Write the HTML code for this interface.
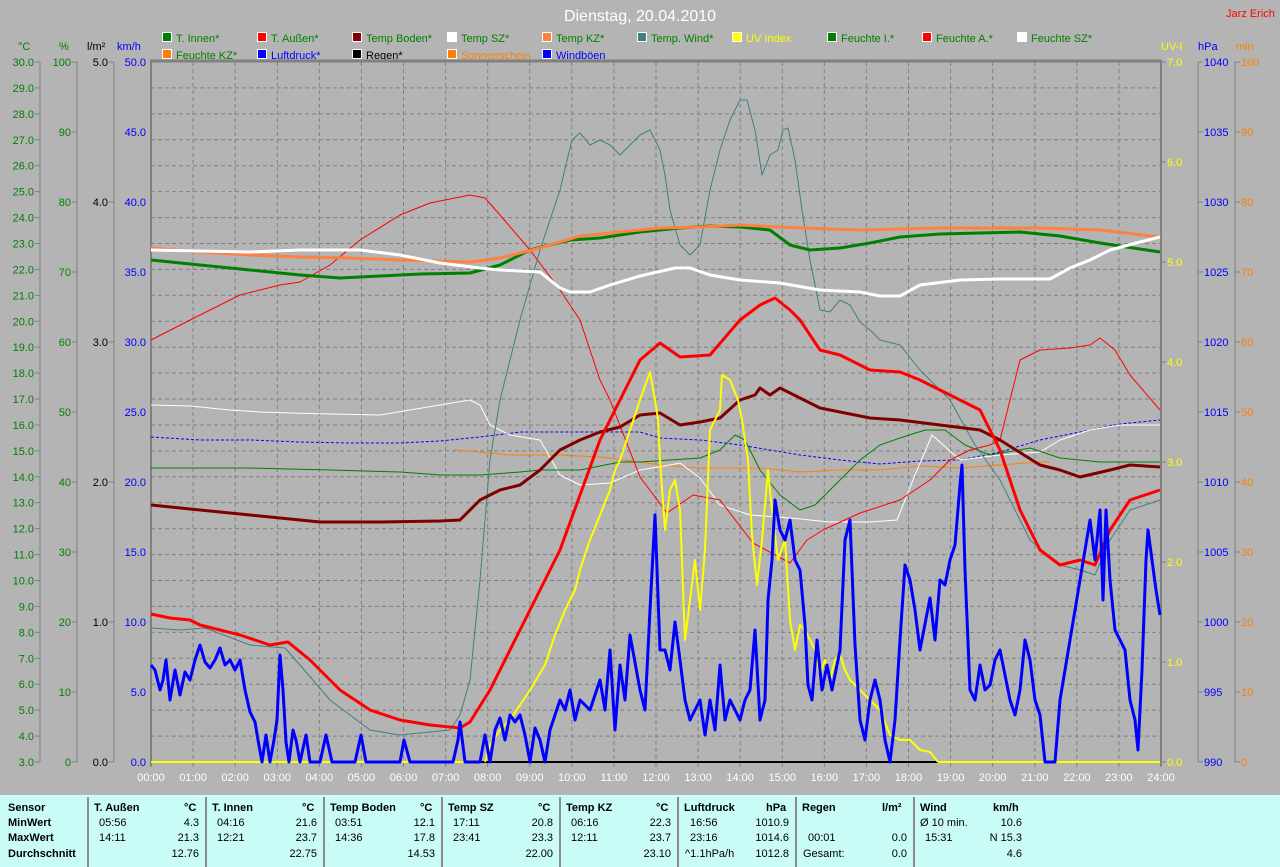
<!DOCTYPE html>
<html><head><meta charset="utf-8">
<style>
html,body{margin:0;padding:0;}
body{width:1280px;height:867px;background:#b4b4b4;overflow:hidden;position:relative;font-family:"Liberation Sans",sans-serif;}
svg{position:absolute;left:0;top:0;}
svg text{font-family:"Liberation Sans",sans-serif;font-size:11px;}
#tbl{position:absolute;left:0;top:795px;width:1280px;height:72px;background:#c9fcf7;font-size:11px;color:#000;}
#tbl div{position:absolute;white-space:nowrap;}
.b{font-weight:bold;}
.sep{width:2px;background:#8c8c8c;top:2px;height:70px;}
</style></head><body>
<svg id="s" width="1280" height="795" xmlns="http://www.w3.org/2000/svg">
<text x="640" y="21" text-anchor="middle" fill="#ffffff" style="font-size:16px">Dienstag, 20.04.2010</text>
<text x="1226" y="17" fill="#ff0000" style="font-size:11px">Jarz Erich</text>
<g id="legend"></g>
<g id="grid"></g>
<g id="axes"></g>
<g id="curves" fill="none" stroke-linejoin="round"></g>
</svg>
<div id="tbl">
<div class="sep" style="left:87px"></div><div class="sep" style="left:205px"></div><div class="sep" style="left:323px"></div><div class="sep" style="left:441px"></div><div class="sep" style="left:559px"></div><div class="sep" style="left:677px"></div><div class="sep" style="left:795px"></div><div class="sep" style="left:913px"></div>
<div class="b" style="left:8px;top:7px">Sensor</div><div class="b" style="left:8px;top:22px">MinWert</div><div class="b" style="left:8px;top:37px">MaxWert</div><div class="b" style="left:8px;top:53px">Durchschnitt</div>
<div class="b" style="left:94px;top:7px">T. Außen</div><div class="b" style="left:184px;top:7px">°C</div>
<div style="left:99px;top:22px">05:56</div><div style="right:1081px;top:22px">4.3</div>
<div style="left:99px;top:37px">14:11</div><div style="right:1081px;top:37px">21.3</div>
<div style="right:1081px;top:53px">12.76</div>
<div class="b" style="left:212px;top:7px">T. Innen</div><div class="b" style="left:302px;top:7px">°C</div>
<div style="left:217px;top:22px">04:16</div><div style="right:963px;top:22px">21.6</div>
<div style="left:217px;top:37px">12:21</div><div style="right:963px;top:37px">23.7</div>
<div style="right:963px;top:53px">22.75</div>
<div class="b" style="left:330px;top:7px">Temp Boden</div><div class="b" style="left:420px;top:7px">°C</div>
<div style="left:335px;top:22px">03:51</div><div style="right:845px;top:22px">12.1</div>
<div style="left:335px;top:37px">14:36</div><div style="right:845px;top:37px">17.8</div>
<div style="right:845px;top:53px">14.53</div>
<div class="b" style="left:448px;top:7px">Temp SZ</div><div class="b" style="left:538px;top:7px">°C</div>
<div style="left:453px;top:22px">17:11</div><div style="right:727px;top:22px">20.8</div>
<div style="left:453px;top:37px">23:41</div><div style="right:727px;top:37px">23.3</div>
<div style="right:727px;top:53px">22.00</div>
<div class="b" style="left:566px;top:7px">Temp KZ</div><div class="b" style="left:656px;top:7px">°C</div>
<div style="left:571px;top:22px">06:16</div><div style="right:609px;top:22px">22.3</div>
<div style="left:571px;top:37px">12:11</div><div style="right:609px;top:37px">23.7</div>
<div style="right:609px;top:53px">23.10</div>
<div class="b" style="left:684px;top:7px">Luftdruck</div><div class="b" style="left:766px;top:7px">hPa</div>
<div style="left:690px;top:22px">16:56</div><div style="right:491px;top:22px">1010.9</div>
<div style="left:690px;top:37px">23:16</div><div style="right:491px;top:37px">1014.6</div>
<div style="left:685px;top:53px">^1.1hPa/h</div><div style="right:491px;top:53px">1012.8</div>
<div class="b" style="left:802px;top:7px">Regen</div><div class="b" style="left:882px;top:7px">l/m²</div>
<div style="left:808px;top:37px">00:01</div><div style="right:373px;top:37px">0.0</div>
<div style="left:803px;top:53px">Gesamt:</div><div style="right:373px;top:53px">0.0</div>
<div class="b" style="left:920px;top:7px">Wind</div><div class="b" style="left:993px;top:7px">km/h</div>
<div style="left:920px;top:22px">Ø 10 min.</div><div style="right:258px;top:22px">10.6</div>
<div style="left:925px;top:37px">15:31</div><div style="right:258px;top:37px">N 15.3</div>
<div style="right:258px;top:53px">4.6</div>
</div>
<script>
var NS="http://www.w3.org/2000/svg";
function el(p,t,a,txt){var e=document.createElementNS(NS,t);for(var k in a)e.setAttribute(k,a[k]);if(txt!==undefined)e.textContent=txt;document.getElementById(p).appendChild(e);return e;}
// legend
var L=[["T. Innen*","#008000","#008000",162,0],["T. Außen*","#ff0000","#008000",257,0],["Temp Boden*","#800000","#008000",352,0],["Temp SZ*","#ffffff","#008000",447,0],["Temp KZ*","#ff8040","#008000",542,0],["Temp. Wind*","#408080","#008000",637,0],["UV Index","#ffff00","#ffff00",732,0],["Feuchte I.*","#008000","#008000",827,0],["Feuchte A.*","#ff0000","#008000",922,0],["Feuchte SZ*","#ffffff","#008000",1017,0],
["Feuchte KZ*","#ff8000","#008000",162,1],["Luftdruck*","#0000ff","#0000ff",257,1],["Regen*","#000000","#000000",352,1],["Sonnenschein","#ff8000","#ff8000",447,1],["Windböen","#0000ff","#0000ff",542,1]];
L.forEach(function(l){var y=l[4]?58:41;el("legend","rect",{x:l[3]+.5,y:y-8.5,width:9,height:9,fill:l[1],stroke:"#fff"});el("legend","text",{x:l[3]+14,y:y+1,fill:l[2]},l[0]);});
// unit labels
[["°C",18,"#008000"],["%",59,"#008000"],["l/m²",87,"#000"],["km/h",117,"#0000ff"],["UV-I",1161,"#ffff00"],["hPa",1198,"#0000ff"],["min",1236,"#ff8000"]].forEach(function(u){el("axes","text",{x:u[1],y:50,fill:u[2]},u[0]);});
// grid
var X0=151,X1=1161,Y0=62,Y1=762;
for(var i=1;i<27;i++){var y=Y0+i*700/27;el("grid","line",{x1:X0,x2:X1,y1:y.toFixed(1),y2:y.toFixed(1),stroke:"#808080","stroke-dasharray":"4,3"});}
for(var h=1;h<24;h++){var x=X0+h*(X1-X0)/24;el("grid","line",{x1:x.toFixed(1),x2:x.toFixed(1),y1:Y0,y2:Y1,stroke:"#808080","stroke-dasharray":"4,3"});}
el("grid","line",{x1:X0-1,x2:X1+1,y1:61,y2:61,stroke:"#808080","stroke-width":3});
el("grid","line",{x1:X0,x2:X0,y1:61,y2:Y1+4,stroke:"#808080","stroke-width":2});
el("grid","line",{x1:X1,x2:X1,y1:61,y2:Y1+4,stroke:"#808080","stroke-width":2});
for(var h=0;h<=24;h++){var x=X0+h*(X1-X0)/24;el("axes","line",{x1:x,x2:x,y1:Y1,y2:Y1+5,stroke:"#808080"});el("axes","text",{x:x,y:781,fill:"#fff","text-anchor":"middle"},(h<10?"0":"")+h+":00");}
// axes
function axis(lx,n,fn,col,right){el("axes","line",{x1:lx,x2:lx,y1:Y0,y2:Y1,stroke:"#808080"});for(var i=0;i<=n;i++){var y=Y0+i*700/n;el("axes","line",{x1:right?lx:lx-5,x2:right?lx+5:lx,y1:y,y2:y,stroke:"#808080"});el("axes","text",{x:right?lx+6:lx-6,y:y+4,fill:col,"text-anchor":right?"start":"end"},fn(i));}}
axis(40,27,function(i){return (30-i).toFixed(1)},"#008000");
axis(77,10,function(i){return 100-10*i},"#008000");
axis(114,5,function(i){return (5-i).toFixed(1)},"#000");
for(var i=0;i<=10;i++){var y=Y0+i*70;el("axes","text",{x:146,y:y+4,fill:"#0000ff","text-anchor":"end"},(50-5*i).toFixed(1));}
for(var i=0;i<=7;i++){var y=Y0+i*100;el("axes","line",{x1:X1,x2:X1+5,y1:y,y2:y,stroke:"#808080"});el("axes","text",{x:1167,y:y+4,fill:"#ffff00"},(7-i).toFixed(1));}
axis(1198,10,function(i){return 1040-5*i},"#0000ff",true);
axis(1235,10,function(i){return 100-10*i},"#ff8000",true);
// curves
function C(col,w,pts,dash){var a={points:pts,stroke:col,"stroke-width":w};if(dash)a["stroke-dasharray"]=dash;el("curves","polyline",a);}
C("#ffff00",2,"151,762 485,762");
C("#000000",2,"480,762 938,762");
C("#ffff00",2,"938,762 1160,762");
C("#ff8000",1,"455,450 480,452 510,455 560,455 600,457 640,462 660,465 700,468 760,468 800,472 840,470 880,470 920,466 960,468 1000,465 1040,462 1050,462");
C("#0000ff",1,"151,437 200,440 250,440 300,442 350,443 400,443 440,441 480,437 520,432 600,432 640,432 660,438 700,440 740,445 800,455 840,460 880,464 920,461 960,460 1000,452 1040,440 1080,432 1120,424 1160,420","3,2");
C("#ffffff",1,"151,405 190,406 230,410 260,412 290,413 330,414 380,415 410,410 440,405 470,400 480,405 490,425 510,435 540,440 560,475 580,485 610,483 640,470 670,465 680,463 700,478 720,505 750,515 790,518 830,522 870,522 897,520 915,475 932,435 960,460 1000,455 1040,452 1060,440 1090,430 1120,425 1160,425");
C("#008000",1,"151,468 250,468 330,470 400,472 440,475 480,475 520,472 540,470 580,470 620,462 640,462 670,460 700,458 720,450 735,435 745,440 760,470 780,495 800,510 815,505 840,480 860,460 880,445 900,438 925,430 945,430 965,445 990,455 1030,448 1060,458 1100,462 1160,462");
C("#ff0000",1,"151,340 200,315 240,295 280,285 300,282 330,265 360,240 400,215 430,203 470,195 485,198 500,215 530,250 560,290 580,320 600,380 610,400 640,477 667,513 693,495 720,500 753,543 790,563 807,540 823,530 860,513 900,500 930,480 950,460 970,450 990,445 1000,440 1020,360 1040,350 1070,348 1090,345 1100,338 1115,350 1130,375 1160,410");
C("#408080",1,"151,628 180,630 205,628 250,645 285,648 300,665 330,700 370,730 400,735 450,730 460,715 470,680 480,580 490,460 500,400 520,320 540,250 560,190 572,140 580,133 590,145 600,140 610,145 620,155 630,145 640,135 650,130 660,150 665,175 670,210 680,245 690,255 700,245 710,190 720,150 730,120 740,100 747,100 755,130 762,175 770,155 778,150 783,130 788,128 795,160 802,210 810,260 820,310 830,312 840,300 850,305 860,322 870,330 880,340 900,345 920,370 950,400 975,445 1000,480 1030,540 1060,565 1080,570 1095,575 1110,540 1130,510 1160,500");
C("#008000",3,"151,260 200,265 250,270 300,275 340,278 380,276 420,274 470,273 500,265 530,250 570,240 600,238 640,232 680,228 710,226 740,227 770,230 790,245 810,250 840,248 870,243 900,237 940,234 980,233 1020,232 1060,236 1100,243 1160,252");
C("#ff8040",3,"151,248 200,252 250,255 300,257 350,258 400,260 470,262 500,258 540,248 580,236 620,232 660,228 700,227 740,225 800,228 860,230 940,228 1040,228 1100,230 1160,237");
C("#ffffff",3,"151,250 250,252 300,250 360,250 400,255 440,263 480,268 500,270 540,272 560,288 570,292 590,292 610,285 640,276 675,268 690,268 710,275 740,280 780,283 820,290 860,292 880,296 900,296 920,285 960,280 1000,279 1050,279 1070,268 1090,260 1110,250 1140,242 1160,237");
C("#800000",3,"151,505 200,510 250,515 280,518 320,522 380,522 440,521 460,520 480,500 500,490 520,485 540,470 560,450 580,440 600,432 620,427 640,415 660,413 680,425 700,422 720,418 740,400 755,395 760,388 770,395 780,388 800,398 820,408 840,412 870,418 900,420 940,425 980,430 1000,440 1040,465 1060,470 1080,477 1110,470 1130,465 1160,467");
C("#ff0000",3,"151,614 170,618 190,620 200,625 240,635 270,645 288,642 310,660 340,690 370,710 400,720 430,725 460,728 470,722 490,690 520,630 560,550 600,440 620,400 640,360 660,343 680,357 710,355 740,320 760,305 775,298 790,310 800,320 820,350 840,355 870,370 900,372 920,380 950,395 980,410 1000,450 1020,510 1040,550 1060,565 1080,560 1095,565 1110,530 1130,500 1160,490");
C("#ffff00",2,"485,762 490,745 500,730 510,720 520,705 530,690 545,665 555,635 565,610 575,590 580,570 590,540 600,515 610,490 615,470 620,460 630,430 640,400 650,372 655,400 658,420 660,460 665,530 670,490 675,480 680,510 685,640 690,600 695,560 700,610 705,550 710,430 720,410 722,375 730,380 738,400 742,420 748,460 752,535 757,585 762,540 768,470 772,510 778,560 785,540 790,620 795,650 800,625 805,630 810,640 815,650 820,675 825,660 830,680 835,660 840,655 845,670 850,680 860,690 870,700 880,710 890,735 900,740 910,740 920,750 930,752 938,762");
C("#0000ff",3,"151,665 155,670 160,690 163,680 166,660 170,700 175,670 180,695 185,672 190,680 195,660 200,645 205,662 210,668 215,660 220,648 225,665 230,660 235,670 240,660 245,690 250,712 255,722 258,740 262,762 266,735 270,762 274,740 277,720 280,655 283,690 286,742 289,762 293,730 296,740 300,762 306,735 310,762 320,762 326,735 332,762 355,762 361,735 366,762 400,762 404,740 410,762 453,762 458,740 460,722 465,762 480,762 485,735 490,762 495,730 500,718 505,740 510,715 515,722 520,715 525,735 530,762 535,728 540,740 545,762 550,730 555,715 560,700 565,710 570,690 575,720 580,700 590,710 600,680 605,710 610,650 615,730 620,665 625,700 630,635 640,690 645,710 650,610 655,515 660,650 665,650 670,670 675,622 680,660 685,700 690,720 700,700 705,735 710,700 715,730 720,665 725,720 730,700 740,720 745,700 750,690 755,630 760,720 765,700 768,600 772,560 775,500 780,530 785,540 790,520 795,560 800,570 805,625 808,685 812,700 817,640 822,690 827,665 832,690 840,650 845,540 850,520 855,645 860,720 865,740 870,700 875,680 880,700 885,740 890,762 895,720 900,640 905,565 910,580 915,610 920,650 930,598 935,640 940,580 945,585 950,560 955,545 960,485 962,465 965,570 970,690 975,700 980,665 985,690 990,685 995,660 1000,650 1010,700 1015,715 1020,690 1025,640 1030,660 1035,700 1040,715 1045,762 1055,762 1060,700 1065,670 1070,640 1075,610 1080,580 1085,550 1090,520 1095,560 1100,510 1103,600 1106,510 1110,580 1115,630 1120,640 1125,650 1130,700 1135,720 1138,750 1142,670 1146,560 1148,530 1152,560 1156,590 1160,615");
</script>
</body></html>
